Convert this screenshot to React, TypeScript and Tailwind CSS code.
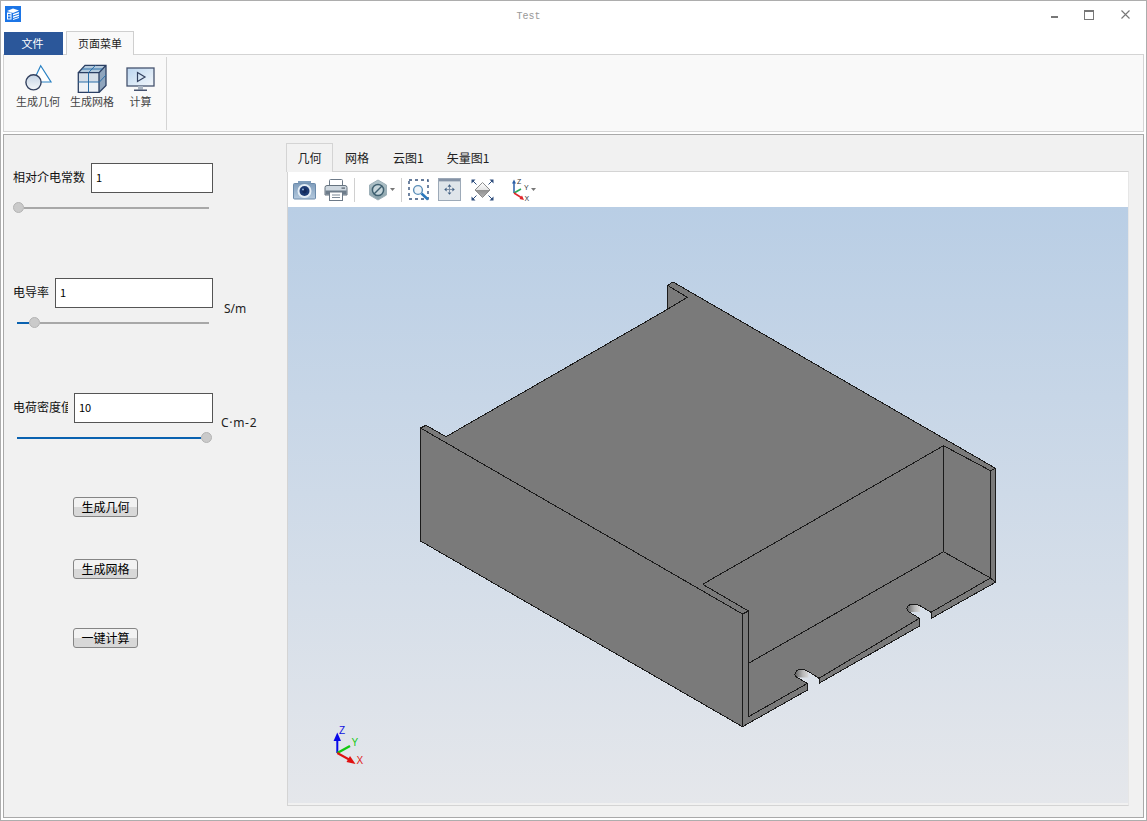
import React from "react";

const CJK = "font-['Noto_Sans_CJK_SC','Noto_Sans',sans-serif]";

function AppIcon() {
  return (
    <svg width="16" height="16" viewBox="0 0 16 16">
      <rect width="16" height="16" fill="#1c75e6" />
      <path d="M2 5 L8 2.5 L14 4.5 L8 7 Z" fill="#fff" />
      <path d="M2 6.5 H6.5 V13.5 H2 Z M3 8 V9.5 H5.5 V8 Z M3 10.5 V12.5 H5.5 V10.5 Z" fill="#fff" fillRule="evenodd" />
      <path d="M8 8 L14 6 V7.5 L8 9.5 Z M8 10.5 L14 8.5 V10 L8 12 Z M8 13 L14 11 V12 L8 14 Z" fill="#fff" />
    </svg>
  );
}

function GeometryIcon() {
  return (
    <svg width="38" height="28" viewBox="0 0 38 28">
      <defs>
        <linearGradient id="gc" x1="0" y1="0" x2="0" y2="1">
          <stop offset="0" stopColor="#c4d3e4" />
          <stop offset="1" stopColor="#f4f7fa" />
        </linearGradient>
      </defs>
      <path d="M21.7 1.7 L32 18 H14 Z" fill="#fff" stroke="#2a82c4" strokeWidth="1.2" />
      <circle cx="14.5" cy="18.3" r="7.6" fill="url(#gc)" stroke="#33415f" strokeWidth="1.4" />
    </svg>
  );
}

function MeshIcon() {
  return (
    <svg width="30" height="29" viewBox="0 0 30 29">
      <path d="M1.3 8.7 H22 V28.5 H1.3 Z" fill="#d5dee8" />
      <path d="M1.3 8.7 L8 1.3 H29 L22 8.7 Z" fill="#b4cadd" />
      <path d="M22 8.7 L29 1.3 V21.5 L22 28.5 Z" fill="#8fa5bd" />
      <path d="M1.3 18 H22 V28.5 H1.3 Z" fill="#eef2f6" />
      <path d="M1.3 8.7 H22 V28.5 H1.3 Z M1.3 8.7 L8 1.3 H29 V21.5 L22 28.5 M22 8.7 L29 1.3" fill="none" stroke="#2b3f63" strokeWidth="1.3" />
      <path d="M11.5 8.7 V28.5 M1.3 18 H22 M22 18.5 L29 11 M11.5 8.7 L18.5 1.3 M5 5 H25.5" fill="none" stroke="#2b6fa8" strokeWidth="1" />
    </svg>
  );
}

function MonitorIcon() {
  return (
    <svg width="29" height="25" viewBox="0 0 29 25">
      <defs>
        <linearGradient id="mo" x1="0" y1="0" x2="1" y2="1">
          <stop offset="0" stopColor="#bcd6f0" />
          <stop offset="1" stopColor="#f3f7fb" />
        </linearGradient>
      </defs>
      <rect x="1" y="1" width="27" height="18" fill="url(#mo)" stroke="#46536f" strokeWidth="1.3" />
      <path d="M11.5 5.5 L19 10 L11.5 14.5 Z" fill="none" stroke="#33415f" strokeWidth="1.2" />
      <rect x="12" y="19" width="5" height="3.5" fill="#a9b4c2" />
      <rect x="8" y="22.5" width="13" height="1.5" fill="#46536f" />
    </svg>
  );
}

function CameraIcon() {
  return (
    <svg width="23" height="20" viewBox="0 0 23 20">
      <defs>
        <linearGradient id="cam" x1="0" y1="0" x2="0" y2="1">
          <stop offset="0" stopColor="#7f9dbc" />
          <stop offset="1" stopColor="#b4c9de" />
        </linearGradient>
      </defs>
      <path d="M1.5 3.5 H21.5 Q22.5 3.5 22.5 4.5 V18 Q22.5 19 21.5 19 H1.5 Q0.5 19 0.5 18 V4.5 Q0.5 3.5 1.5 3.5 Z" fill="url(#cam)" stroke="#6c8bab" />
      <rect x="5" y="1" width="13" height="2.5" fill="#7f9dbc" />
      <circle cx="11.5" cy="11" r="7" fill="#e4edf5" />
      <circle cx="11.5" cy="11" r="5" fill="#1d3a72" />
      <circle cx="11.5" cy="11" r="2.4" fill="#14295a" />
      <circle cx="10" cy="9.5" r="1" fill="#8fb0d8" />
    </svg>
  );
}

function PrinterIcon() {
  return (
    <svg width="24" height="22" viewBox="0 0 24 22">
      <rect x="5.5" y="0.5" width="13" height="6.5" rx="1" fill="#fff" stroke="#6d7a88" />
      <path d="M3 6.5 H21 Q23 6.5 23 8.5 V16 H1 V8.5 Q1 6.5 3 6.5 Z" fill="#cfd8e0" stroke="#66737f" />
      <rect x="1.5" y="11.5" width="21" height="4" fill="#6d7c8a" />
      <rect x="5.5" y="13" width="13" height="8.5" fill="#fff" stroke="#6d7a88" />
      <path d="M8 16 H16 M8 18.5 H16" stroke="#7d8996" />
      <rect x="17.5" y="8.5" width="3.5" height="1.2" fill="#55616d" />
    </svg>
  );
}

function DropArrow() {
  return (
    <svg width="5" height="3" viewBox="0 0 5 3" className="mb-px">
      <path d="M0 0 H5 L2.5 3 Z" fill="#777" />
    </svg>
  );
}

function ClipIcon() {
  return (
    <svg width="20" height="22" viewBox="0 0 20 22">
      <defs>
        <linearGradient id="hx" x1="0" y1="0" x2="0" y2="1">
          <stop offset="0" stopColor="#b4c6cc" />
          <stop offset="1" stopColor="#88a0a8" />
        </linearGradient>
      </defs>
      <path d="M10 1 L18.5 6 V16 L10 21 L1.5 16 V6 Z" fill="url(#hx)" stroke="#9db0b8" />
      <circle cx="10" cy="11" r="5.6" fill="#c6d5da" stroke="#3f6070" strokeWidth="1.5" />
      <path d="M6 15 L14 7" stroke="#3f6070" strokeWidth="1.5" />
    </svg>
  );
}

function ZoomBoxIcon() {
  return (
    <svg width="23" height="22" viewBox="0 0 23 22">
      <rect x="1" y="1" width="19" height="19" fill="none" stroke="#33507a" strokeWidth="1.4" strokeDasharray="3 3" />
      <circle cx="10" cy="11" r="4.4" fill="#f0f5f9" stroke="#5b8fb9" strokeWidth="1.4" />
      <path d="M13.5 14.5 L20 20.5" stroke="#2a78bd" strokeWidth="2.6" />
    </svg>
  );
}

function FitIcon() {
  return (
    <svg width="23" height="23" viewBox="0 0 24 24">
      <rect x="0.5" y="0.5" width="23" height="23" fill="#dfe5ea" stroke="#9aa7b6" />
      <rect x="1" y="1" width="22" height="2.5" fill="#8593a6" />
      <path d="M12 9 V15 M9 12 H15" stroke="#7b8ea6" />
      <path d="M12 6.5 L14 9 H10 Z M12 17.5 L10 15 H14 Z M6.5 12 L9 10 V14 Z M17.5 12 L15 14 V10 Z" fill="#3d5c80" />
    </svg>
  );
}

function DiamondIcon() {
  return (
    <svg width="23" height="22" viewBox="0 0 23 22">
      <defs>
        <linearGradient id="dm" x1="0" y1="0" x2="0" y2="1">
          <stop offset="0" stopColor="#ffffff" />
          <stop offset="0.5" stopColor="#e4e4e4" />
          <stop offset="0.5" stopColor="#8f8f8f" />
          <stop offset="1" stopColor="#b4b4b4" />
        </linearGradient>
      </defs>
      <path d="M11.5 3.5 L19 11 L11.5 18.5 L4 11 Z" fill="url(#dm)" stroke="#8c8c8c" />
      <path d="M0.5 0.5 H4.5 L0.5 4.5 Z M22.5 0.5 V4.5 L18.5 0.5 Z M0.5 21.5 V17.5 L4.5 21.5 Z M22.5 21.5 H18.5 L22.5 17.5 Z" fill="#304f7e" />
      <path d="M2 2 L5.5 5.5 M21 2 L17.5 5.5 M2 20 L5.5 16.5 M21 20 L17.5 16.5" stroke="#304f7e" />
    </svg>
  );
}

function AxisIcon() {
  return (
    <svg width="22" height="24" viewBox="0 0 22 24">
      <path d="M5 15 V4" stroke="#2a5ea8" strokeWidth="1.5" />
      <path d="M5 1.5 L7 5.5 H3 Z" fill="#2a5ea8" />
      <path d="M5 15 L12 11" stroke="#28a85a" strokeWidth="1.5" />
      <path d="M5 15 L13 20" stroke="#e0262b" strokeWidth="1.5" />
      <path d="M15 22 L10.5 21 L13 17.5 Z" fill="#e0262b" />
      <text x="8" y="6" fontSize="7" fill="#333" fontFamily="Liberation Sans">Z</text>
      <text x="15" y="12" fontSize="7" fill="#333" fontFamily="Liberation Sans">Y</text>
      <text x="15.5" y="23" fontSize="7" fill="#333" fontFamily="Liberation Sans">X</text>
    </svg>
  );
}

function Slider({ pad, blue }: { pad: string; blue: string }) {
  return (
    <div className={`mt-[9px] flex h-[11px] w-[196px] items-center ${pad}`}>
      <div className={`h-[2px] shrink-0 bg-[#0a62b0] ${blue}`} />
      <div className="h-[11px] w-[11px] shrink-0 rounded-full border border-[#b4b4b4] bg-[#cacaca]" />
      <div className="h-[2px] flex-1 bg-[#a8a8a8]" />
    </div>
  );
}

function Field({
  label,
  labelW,
  inputW,
  value,
  unit,
  unitClass,
}: {
  label: string;
  labelW: string;
  inputW: string;
  value: string;
  unit?: string;
  unitClass?: string;
}) {
  return (
    <div className="flex h-[30px] items-start">
      <div className={`flex h-[30px] shrink-0 items-center overflow-hidden whitespace-nowrap pb-[2px] text-[12px] text-[#111] ${labelW}`}>
        {label}
      </div>
      <div className={`flex h-[30px] shrink-0 items-center border border-[#555] bg-white pb-px pl-[4px] text-[11px] text-black ${inputW}`}>
        {value}
      </div>
      {unit && (
        <div className={`whitespace-nowrap font-['Noto_Sans',sans-serif] text-[12px] leading-[18px] text-[#222] ${unitClass}`}>
          {unit}
        </div>
      )}
    </div>
  );
}

function FlatButton({ label, mt }: { label: string; mt: string }) {
  return (
    <button
      className={`ml-[60px] flex h-[20px] w-[65px] items-center justify-center rounded-[3px] border border-[#858585] bg-linear-to-b from-[#f2f2f2] from-50% to-[#d8d8d8] to-50% text-[12px] leading-none text-black ${mt}`}
    >
      {label}
    </button>
  );
}

function Model() {
  const silhouette =
    "M420.5 428 L426 425.3 L446 436.7 L667.5 309.3 L667.5 285.3 L673 282 L995.5 468.3 L995.5 582.3 L931 618.5 L931 612.3 L920 605.7 Q913 602.5 908.5 605.5 Q905 609.5 909 612 L919.5 618.3 L919.5 626 L819 683.3 L819 678.3 L808.3 671.5 Q801 667.5 796.5 671 Q793 675 797 677.5 L807.5 683.3 L807.5 690 L742.5 726.7 L420.5 541 Z";
  const lines = [
    "M420.5 428 L742.5 614 L742.5 726.7",
    "M742.5 614 L748.5 611 L748.5 716.7 L807.5 683.3",
    "M702.7 584.3 L748.5 611",
    "M667.5 285.3 L687.3 297.3 L667.5 309.3",
    "M702.7 584.3 L943.5 445.7 L990.5 470.7 L995.5 468.3",
    "M943.5 445.7 L943.5 551.7 L990.5 578 L990.5 470.7",
    "M943.5 551.7 L748.5 663.3",
    "M990.5 578 L931 612.3",
    "M819 678.3 L919.5 618.3",
    "M990.5 578 L995.5 582.3",
  ];
  return (
    <svg className="block h-full w-full" viewBox="288 207 840 596">
      <defs>
        <linearGradient id="hole" x1="0" y1="0" x2="1" y2="0">
          <stop offset="0" stopColor="#5e5e5e" />
          <stop offset="0.6" stopColor="#b8b8b8" />
          <stop offset="1" stopColor="#d8d8d8" />
        </linearGradient>
      </defs>
      <path d={silhouette} fill="#7a7a7a" stroke="none" />
      <path d="M920 605.7 Q913 602.5 908.5 605.5 Q905 609.5 909 612 L920 612 Z" fill="url(#hole)" />
      <path d="M808.3 671.5 Q801 667.5 796.5 671 Q793 675 797 677.5 L808.3 677.5 Z" fill="url(#hole)" />
      <path d={silhouette} fill="none" stroke="#1a1a1a" strokeWidth="1" shapeRendering="crispEdges" />
      {lines.map((d) => (
        <path key={d} d={d} fill="none" stroke="#1a1a1a" strokeWidth="1" shapeRendering="crispEdges" />
      ))}
      <path d="M337.3 753 V738" stroke="#0808e8" strokeWidth="2" />
      <path d="M337.3 732.5 L341 741 H333.6 Z" fill="#0808e8" />
      <path d="M337.3 753 L350 746" stroke="#12c812" strokeWidth="2.4" />
      <path d="M337.3 753 L350 760" stroke="#e01010" strokeWidth="2" />
      <path d="M355.5 764 L346.5 762 L350 756 Z" fill="#e01010" />
      <text x="339" y="734" fontSize="10" fill="#1010e0" fontFamily="Liberation Sans">Z</text>
      <text x="351.5" y="746" fontSize="10" fill="#14c814" fontFamily="Liberation Sans">Y</text>
      <text x="356.5" y="764" fontSize="10" fill="#e01818" fontFamily="Liberation Sans">X</text>
    </svg>
  );
}

export default function App() {
  return (
    <div className={`flex h-[821px] w-[1147px] flex-col overflow-hidden border border-[#adadad] bg-white ${CJK}`}>
      {/* Title bar */}
      <div className="flex h-[30px] shrink-0 items-center pl-[4px]">
        <div className="mb-[5px]"><AppIcon /></div>
        <div className="flex-1 pl-px text-center font-['Liberation_Mono',monospace] text-[10px] text-[#999]">Test</div>
        <div className="mb-[3px] flex items-center pr-px">
          <div className="flex w-[38px] justify-center pt-[5px]"><div className="h-[2px] w-[7px] bg-[#777]" /></div>
          <div className="flex w-[32px] justify-center"><div className="h-[10px] w-[10px] border border-t-2 border-[#777]" /></div>
          <div className="flex w-[40px] justify-center">
            <svg width="9" height="9" viewBox="0 0 9 9"><path d="M0.5 0.5 L8.5 8.5 M8.5 0.5 L0.5 8.5" stroke="#777" strokeWidth="1.1" /></svg>
          </div>
        </div>
      </div>

      {/* Ribbon tabs */}
      <div className="relative z-10 -mb-px flex h-[24px] shrink-0 items-end pl-[3px] text-[11px]">
        <div className="flex h-[23px] w-[59px] items-center justify-center bg-[#2b579a] pb-px pr-[2px] text-white">文件</div>
        <div className="ml-[3px] flex h-[24px] w-[68px] items-center justify-center border border-b-0 border-[#cfcfcf] bg-[#f9f9f9] pb-px text-[#222]">页面菜单</div>
      </div>

      {/* Ribbon */}
      <div className="mx-[2px] flex h-[78px] shrink-0 border border-[#d4d4d4] bg-[#f9f9f9] pl-[11px] text-[11px] text-[#444]">
        <div className="flex">
          <div className="flex w-[46px] flex-col items-center pt-[9px]">
            <div className="flex h-[28px] items-end"><GeometryIcon /></div>
            <div className="mt-px whitespace-nowrap">生成几何</div>
          </div>
          <div className="ml-[8px] flex w-[46px] flex-col items-center pt-[9px]">
            <div className="h-[28px]"><MeshIcon /></div>
            <div className="mt-px whitespace-nowrap">生成网格</div>
          </div>
          <div className="ml-[11px] flex w-[29px] flex-col items-center pt-[12px]">
            <div className="h-[25px]"><MonitorIcon /></div>
            <div className="mt-px whitespace-nowrap">计算</div>
          </div>
        </div>
        <div className="ml-[11px] mt-[2px] h-[73px] w-px bg-[#d4d4d4]" />
      </div>

      {/* Main */}
      <div className="mx-[2px] mt-[2px] flex h-[684px] shrink-0 border border-[#a9a9a9] bg-[#f1f1f1]">
        <div className="w-[282px] shrink-0 pl-[9px] pt-[28px]">
          <Field label="相对介电常数" labelW="w-[78px]" inputW="w-[122px]" value="1" />
          <Slider pad="" blue="w-0" />
          <div className="mt-[65px]">
            <Field label="电导率" labelW="w-[42px]" inputW="w-[158px]" value="1" unit="S/m" unitClass="ml-[11px] mt-[22px]" />
          </div>
          <Slider pad="pl-[4px]" blue="w-[12px]" />
          <div className="mt-[65px]">
            <Field label="电荷密度值" labelW="w-[55px] mr-[6px]" inputW="w-[139px]" value="10" unit="C·m-2" unitClass="ml-[8px] mt-[21px] tracking-[0.7px]" />
          </div>
          <Slider pad="pl-[4px]" blue="w-[184px]" />
          <FlatButton label="生成几何" mt="mt-[54px]" />
          <FlatButton label="生成网格" mt="mt-[42px]" />
          <FlatButton label="一键计算" mt="mt-[49px]" />
        </div>

        <div className="flex w-[844px] flex-col pt-[8px]">
          <div className="relative z-10 -mb-px flex h-[29px] shrink-0 items-center text-[12px] text-[#222]">
            <div className="flex h-[29px] w-[47px] items-center justify-center border border-b-0 border-[#d4d4d4] bg-[#f2f2f2]">几何</div>
            <div className="ml-[12px]">网格</div>
            <div className="ml-[24px]">云图1</div>
            <div className="ml-[23px]">矢量图1</div>
          </div>
          <div className="ml-px flex h-[635px] w-[842px] flex-col border border-[#d4d4d4] border-r-[#e6e6e6] bg-[#f1f1f1]">
            <div className="flex h-[35px] shrink-0 items-center bg-white">
              <div className="ml-[5px]"><CameraIcon /></div>
              <div className="ml-[8px]"><PrinterIcon /></div>
              <div className="ml-[6px] h-[24px] w-px bg-[#d0d0d0]" />
              <div className="ml-[13px]"><ClipIcon /></div>
              <div className="ml-[2px]"><DropArrow /></div>
              <div className="ml-[6px] h-[24px] w-px bg-[#d0d0d0]" />
              <div className="ml-[6px]"><ZoomBoxIcon /></div>
              <div className="ml-[7px]"><FitIcon /></div>
              <div className="ml-[10px]"><DiamondIcon /></div>
              <div className="ml-[15px]"><AxisIcon /></div>
              <div className="ml-0"><DropArrow /></div>
            </div>
            <div className="relative h-[596px] w-[840px] bg-linear-to-b from-[#b9cee5] to-[#e5e7eb]">
              <Model />
            </div>
          </div>
        </div>
      </div>
      <div className="flex-1 bg-white" />
    </div>
  );
}
